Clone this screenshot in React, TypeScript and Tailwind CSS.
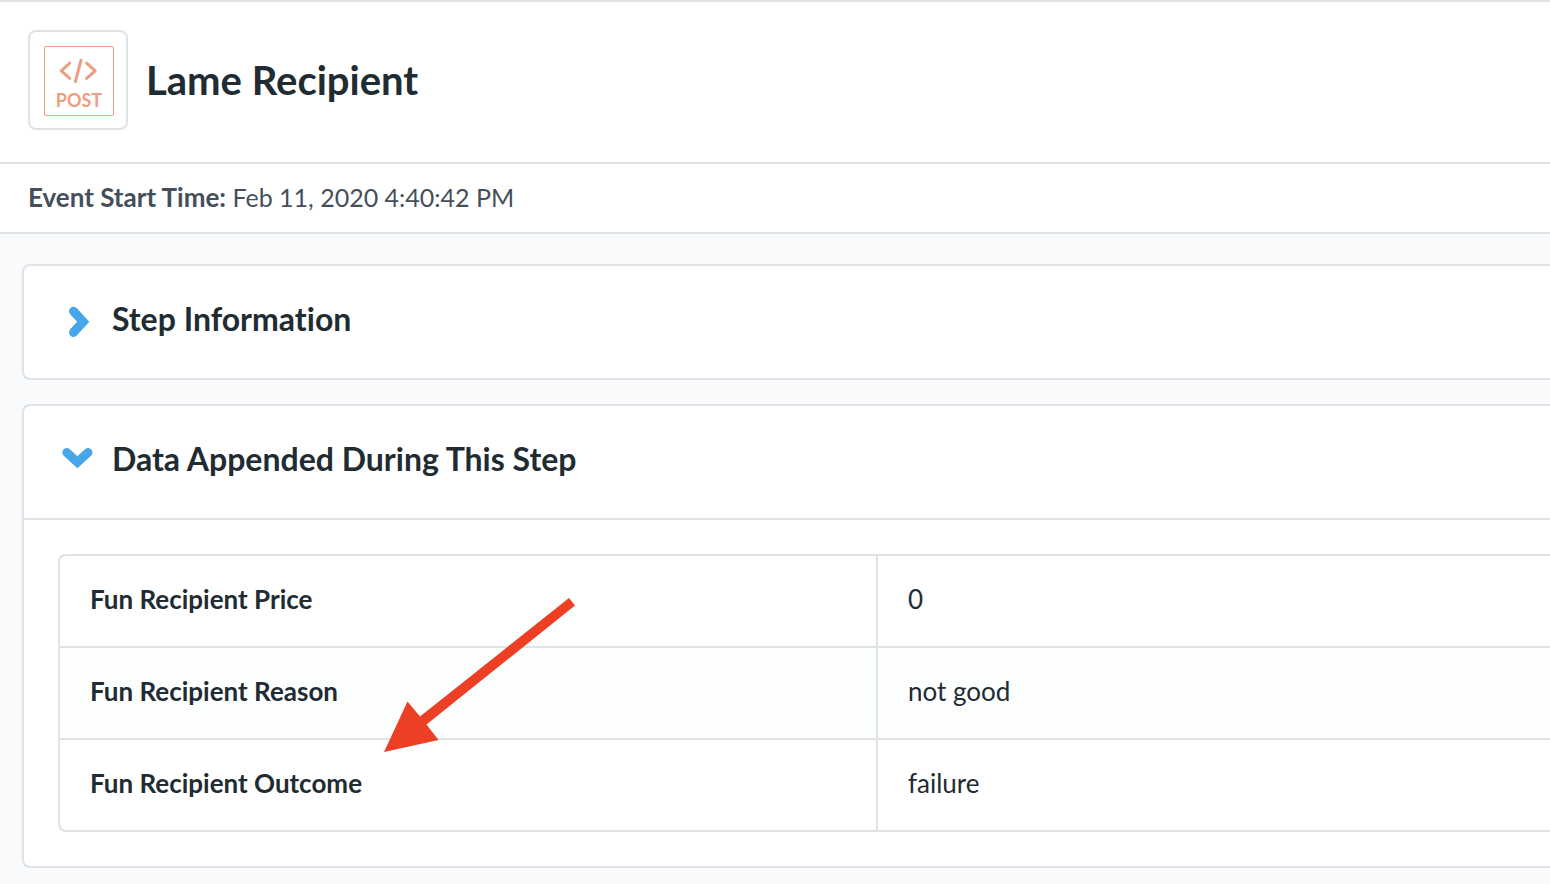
import React from "react";

const rows = [
  { label: "Fun Recipient Price", value: "0" },
  { label: "Fun Recipient Reason", value: "not good" },
  { label: "Fun Recipient Outcome", value: "failure" },
];

function PostIcon() {
  return (
    <div className="shrink-0 rounded-lg border-2 border-[#dfe3e8] bg-white pt-3.5 pr-3 pb-3 pl-3.5">
      <div className="flex h-[70px] w-[70px] flex-col items-center rounded-xs border border-[#eb9f80] pt-[11px] text-[#eb9f80]">
        <svg width="40" height="26" viewBox="0 0 40 26" fill="none" stroke="currentColor" strokeWidth="3" strokeLinecap="round" strokeLinejoin="round" aria-hidden="true">
          <path d="M10.8 5.2 2.2 12.8l8.6 7.6" />
          <path d="M22 2.2 16.4 23.6" />
          <path d="m27.6 5.2 8.6 7.6-8.6 7.6" />
        </svg>
        <span className="mt-1.5 text-[18px] leading-5 font-bold">POST</span>
      </div>
    </div>
  );
}

function Chevron({ open }: { open: boolean }) {
  return (
    <svg className="shrink-0 text-[#47a5ea]" width="32" height="32" viewBox="0 0 32 32" fill="none" stroke="currentColor" strokeWidth="9" strokeLinecap="round" aria-hidden="true">
      <path d={open ? "M4.8 6.5 15.4 16.2 26 6.5" : "M11.5 5.2 21.2 15.8 11.5 26.4"} />
    </svg>
  );
}

function Panel({ title, open = false, children }: { title: string; open?: boolean; children?: React.ReactNode }) {
  return (
    <section className="rounded-l-lg border-2 border-r-0 border-[#dfe3e8] bg-white">
      <h2>
        <button type="button" aria-expanded={open} className="flex h-28 w-full items-center gap-[18px] pl-[38px] text-left text-[32px] leading-10 font-bold">
          <Chevron open={open} />
          <span className="pb-1.5">{title}</span>
        </button>
      </h2>
      {children}
    </section>
  );
}

function Arrow() {
  return (
    <svg className="pointer-events-none absolute top-[42px] left-[324px] text-[#ed3f24]" width="192" height="155" viewBox="0 0 192 155" fill="currentColor" aria-hidden="true">
      <path d="M0 154 23.5 103.5 36 118.5 185 0l6 7.5L42.5 126.5l12 15.5z" />
    </svg>
  );
}

export default function App() {
  return (
    <div className="min-h-screen bg-[#f9fafc] font-['Lato',sans-serif] text-[#212b32] [font-variant-ligatures:none]">
      <header className="flex items-center gap-[18px] border-y-2 border-[#dfe3e8] bg-white px-7 pt-7 pb-8">
        <PostIcon />
        <h1 className="text-[40px] leading-12 font-bold">Lame Recipient</h1>
      </header>

      <div className="border-b-2 border-[#dfe3e8] bg-white px-7 pt-[15px] pb-[17px] text-[25px] leading-9 text-[#454f5b]">
        <strong className="text-[26px] font-bold">Event Start Time:</strong> Feb 11, 2020 4:40:42 PM
      </div>

      <main className="flex flex-col gap-6 pt-[30px] pb-4 pl-[22px]">
        <Panel title="Step Information" />

        <Panel title="Data Appended During This Step" open>
          <div className="border-t-2 border-[#dfe3e8] py-[34px] pl-[34px]">
            <div className="relative overflow-hidden rounded-l-lg border-2 border-r-0 border-[#dfe3e8]">
              <table className="w-full table-fixed border-separate border-spacing-0 text-[26px] leading-9">
                <tbody className="[&>tr:not(:last-child)>*]:border-b-2">
                  {rows.map((row) => (
                    <tr key={row.label} className="even:bg-[#fdfffe]">
                      <th scope="row" className="w-[54.9%] border-r-2 border-[#dfe3e8] px-[30px] pt-[25px] pb-[29px] text-left font-bold">
                        {row.label}
                      </th>
                      <td className="border-[#dfe3e8] px-[30px] pt-[25px] pb-[29px]">{row.value}</td>
                    </tr>
                  ))}
                </tbody>
              </table>
              <Arrow />
            </div>
          </div>
        </Panel>
      </main>
    </div>
  );
}
